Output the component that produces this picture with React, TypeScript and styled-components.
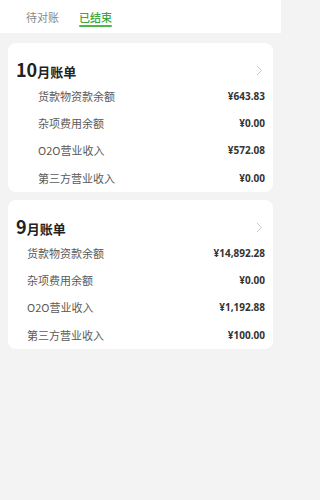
import React from 'react';
import styled, { createGlobalStyle } from 'styled-components';

const GlobalStyle = createGlobalStyle`
  html, body {
    margin: 0;
    padding: 0;
    background: #f3f3f3;
    font-family: "Noto Sans CJK SC", "Noto Sans", sans-serif;
  }
`;

const Page = styled.div`
  width: 281px;
  min-height: 500px;
  background: #f3f3f3;
`;

const TabBar = styled.div`
  display: flex;
  gap: 20px;
  height: 33px;
  padding-left: 26px;
  background: #fff;
`;

const Tab = styled.div<{ $active?: boolean }>`
  padding-top: 9px;
  font-size: 11px;
  line-height: 16px;
  color: ${p => (p.$active ? '#3aa83a' : '#888')};
  font-weight: ${p => (p.$active ? 500 : 400)};

  &::after {
    content: '';
    display: ${p => (p.$active ? 'block' : 'none')};
    height: 2px;
    border-radius: 1px;
    background: #4cb84c;
  }
`;

const List = styled.div`
  display: flex;
  flex-direction: column;
  gap: 8px;
  padding: 10px 8px;
`;

const Card = styled.div`
  background: #fff;
  border-radius: 8px;
  padding: 17px 8px 1px 8px;
`;

const CardHead = styled.div`
  display: flex;
  align-items: center;
  justify-content: space-between;
  height: 20px;
  margin-bottom: 2px;
`;

const Title = styled.div`
  font-weight: 700;
  color: #222;
  font-size: 13px;
  line-height: 20px;
`;

const Month = styled.span`
  font-size: 18px;
`;

const Chevron = styled.svg`
  width: 7px;
  height: 11px;
  margin-right: 2px;
`;

const Row = styled.div<{ $indent: number }>`
  display: flex;
  justify-content: space-between;
  align-items: center;
  height: 27.3px;
  padding-left: ${p => p.$indent}px;
`;

const Label = styled.span`
  font-size: 11px;
  color: #5a5a5a;
`;

const Amount = styled.span`
  font-family: "Noto Sans", "Noto Sans CJK SC", sans-serif;
  font-size: 10px;
  font-weight: 700;
  color: #333;
`;

type Bill = {
  month: string;
  indent: number;
  items: [string, string][];
};

const bills: Bill[] = [
  {
    month: '10',
    indent: 22,
    items: [
      ['货款物资款余额', '¥643.83'],
      ['杂项费用余额', '¥0.00'],
      ['O2O营业收入', '¥572.08'],
      ['第三方营业收入', '¥0.00'],
    ],
  },
  {
    month: '9',
    indent: 11,
    items: [
      ['货款物资款余额', '¥14,892.28'],
      ['杂项费用余额', '¥0.00'],
      ['O2O营业收入', '¥1,192.88'],
      ['第三方营业收入', '¥100.00'],
    ],
  },
];

const App: React.FC = () => {
  return (
    <Page>
      <GlobalStyle />
      <TabBar>
        <Tab>待对账</Tab>
        <Tab $active>已结束</Tab>
      </TabBar>
      <List>
        {bills.map(bill => (
          <Card key={bill.month}>
            <CardHead>
              <Title>
                <Month>{bill.month}</Month>月账单
              </Title>
              <Chevron viewBox="0 0 7 11">
                <path d="M1 1l4.5 4.5L1 10" fill="none" stroke="#c8c8c8" strokeWidth="1" />
              </Chevron>
            </CardHead>
            {bill.items.map(([label, amount]) => (
              <Row key={label} $indent={bill.indent}>
                <Label>{label}</Label>
                <Amount>{amount}</Amount>
              </Row>
            ))}
          </Card>
        ))}
      </List>
    </Page>
  );
};

export default App;
